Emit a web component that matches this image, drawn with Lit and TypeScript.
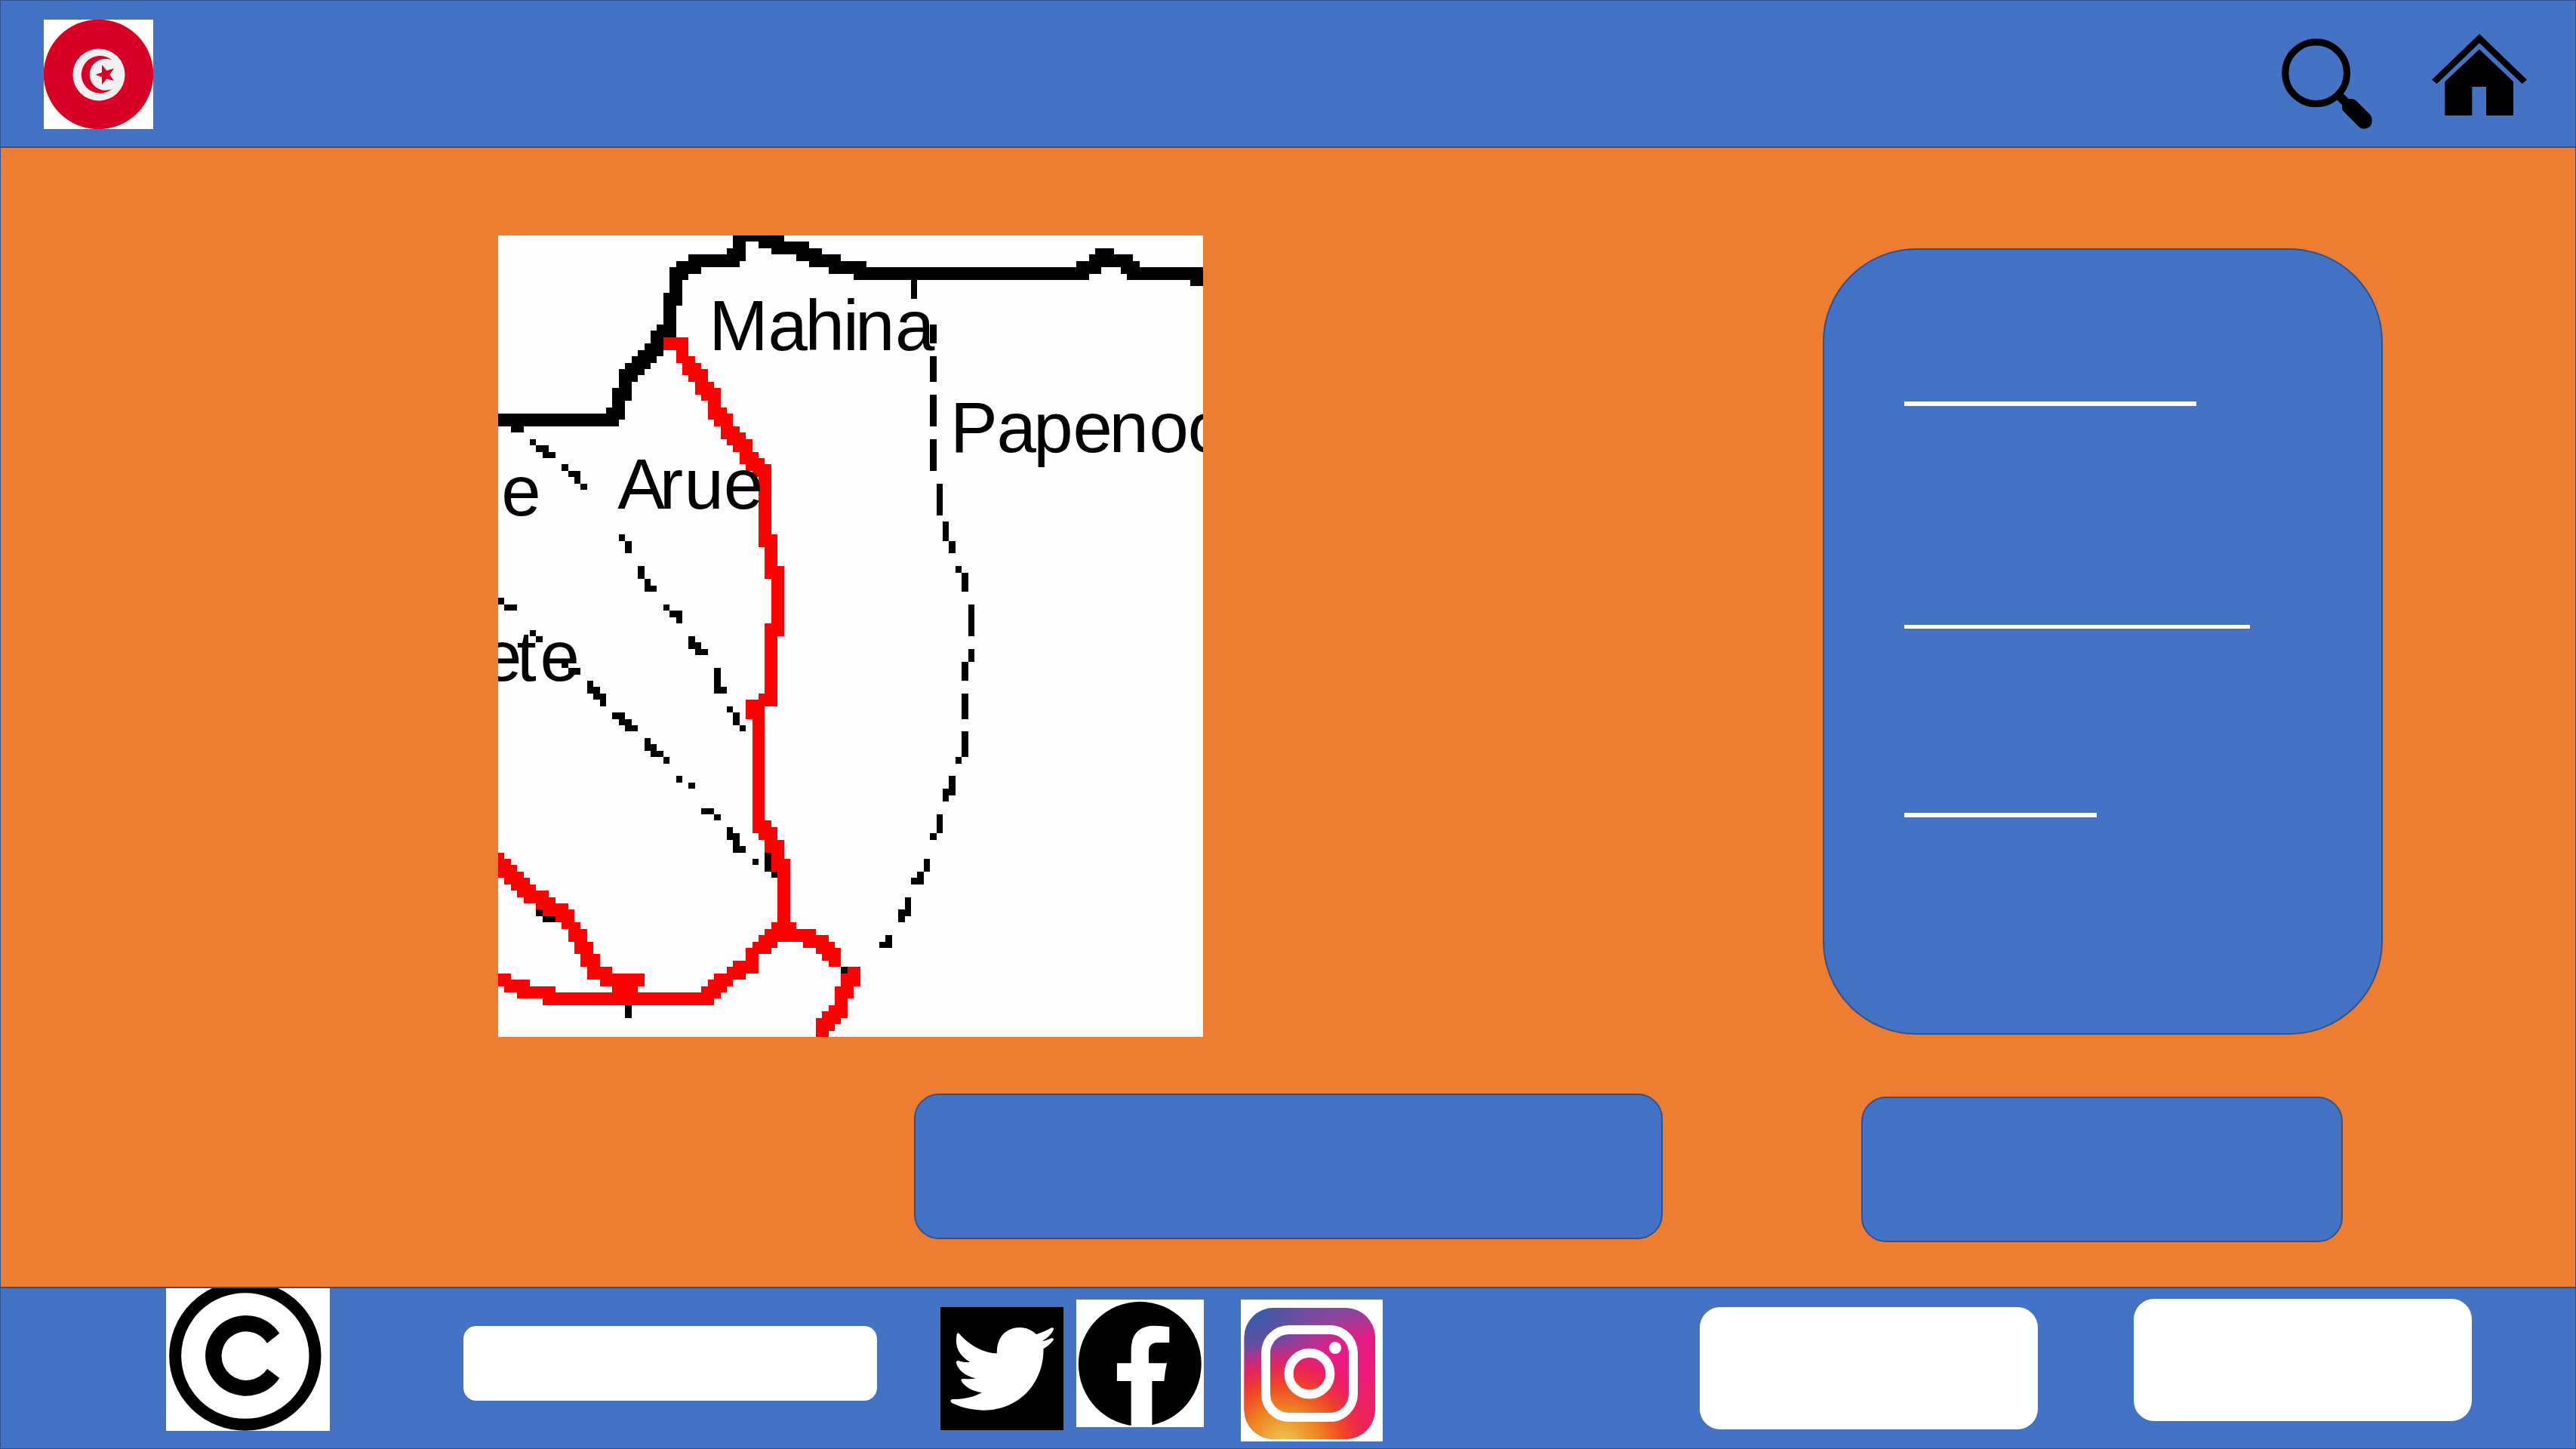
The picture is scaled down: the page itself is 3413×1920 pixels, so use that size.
import { LitElement, html, css, svg } from "lit";
import { customElement } from "lit/decorators.js";

// Map artwork lives on a 111 x 126 cell grid.
// Every run is [column start, column end, row start, row end].
type Run = [number, number, number, number];

const COAST: Run[] = [
  [37, 45, 0, 1], [37, 39, 1, 4], [41, 49, 1, 2], [36, 39, 2, 4], [43, 51, 2, 3],
  [47, 54, 3, 4], [49, 58, 4, 5], [30, 39, 3, 4], [30, 38, 4, 5], [28, 32, 4, 6],
  [27, 30, 5, 7], [27, 29, 7, 11], [26, 28, 9, 16], [25, 28, 14, 16], [24, 28, 15, 16],
  [24, 26, 16, 17], [23, 26, 17, 18], [22, 26, 18, 19], [21, 25, 19, 20], [20, 24, 20, 21],
  [19, 23, 21, 22], [19, 22, 22, 23], [19, 21, 23, 24], [18, 21, 24, 26], [18, 20, 26, 27],
  [17, 20, 27, 28], [0, 20, 28, 29], [0, 19, 29, 30], [2, 4, 30, 31],
  [94, 97, 2, 3], [93, 100, 3, 4], [91, 101, 4, 5], [52, 95, 5, 6], [98, 111, 5, 6],
  [56, 93, 6, 7], [99, 111, 6, 7], [109, 111, 7, 8], [65, 66, 7, 10],
];

const DASHES: Run[] = [
  [68, 69, 14, 17], [68, 69, 19, 23], [68, 69, 25, 30], [68, 69, 32, 37], [69, 70, 39, 44],
  [70, 71, 45, 48], [71, 72, 48, 50], [72, 73, 52, 53], [73, 74, 53, 56], [74, 75, 58, 63],
  [74, 75, 65, 67], [73, 74, 67, 70], [73, 74, 72, 76], [73, 74, 78, 82], [72, 73, 82, 83],
  [71, 72, 85, 88], [70, 71, 87, 89], [69, 70, 91, 94], [68, 69, 94, 95], [67, 68, 98, 100],
  [66, 67, 100, 102], [65, 66, 101, 102], [64, 65, 104, 107], [63, 64, 106, 108],
  [61, 62, 110, 112], [60, 61, 111, 112],
  [5, 6, 32, 33], [6, 8, 33, 34], [7, 9, 34, 35], [10, 11, 36, 37], [11, 13, 37, 38],
  [12, 13, 38, 39], [13, 14, 39, 40],
  [19, 20, 47, 48], [20, 21, 48, 50], [22, 23, 52, 54], [23, 24, 54, 55], [23, 25, 55, 56],
  [26, 27, 58, 59], [27, 29, 59, 60], [28, 29, 60, 61], [30, 31, 63, 65], [31, 32, 64, 65],
  [31, 33, 65, 66], [34, 35, 68, 72], [35, 36, 71, 72], [36, 37, 74, 75], [37, 38, 75, 77],
  [38, 39, 77, 78],
  [0, 1, 57, 58], [1, 3, 58, 59], [5, 6, 62, 63], [6, 7, 63, 64], [10, 11, 67, 68],
  [11, 13, 68, 69], [14, 15, 70, 72], [15, 16, 71, 73], [16, 17, 72, 74], [18, 20, 75, 76],
  [19, 21, 76, 77], [20, 22, 77, 78], [23, 24, 79, 81], [24, 25, 80, 81], [24, 26, 81, 82],
  [26, 27, 82, 83], [28, 29, 85, 86], [30, 31, 86, 87], [32, 34, 90, 91], [34, 35, 91, 92],
  [36, 37, 93, 95], [37, 38, 94, 97], [38, 39, 96, 97], [40, 41, 98, 99], [42, 43, 97, 100],
  [43, 44, 100, 101], [6, 7, 106, 107], [7, 9, 107, 108], [20, 21, 121, 123], [54, 55, 115, 116],
];

const ROUTE: Run[] = [
  [26, 30, 16, 18], [28, 30, 18, 19], [28, 31, 19, 20], [29, 32, 20, 21], [29, 33, 21, 22],
  [30, 33, 22, 23], [31, 34, 23, 24], [31, 35, 24, 25], [32, 35, 25, 26], [33, 35, 26, 27],
  [33, 36, 27, 28], [33, 37, 28, 29], [34, 37, 29, 30], [35, 38, 30, 31], [35, 39, 31, 32],
  [36, 40, 32, 33], [37, 40, 33, 34], [38, 41, 34, 35], [38, 42, 35, 36], [39, 43, 36, 37],
  [40, 43, 37, 38], [41, 43, 38, 47], [41, 44, 47, 49], [42, 44, 49, 52], [42, 45, 52, 54],
  [43, 45, 54, 61], [42, 45, 61, 63], [42, 44, 63, 72], [41, 44, 72, 73], [39, 44, 73, 74],
  [39, 42, 74, 76], [40, 42, 76, 92], [40, 43, 92, 93], [40, 44, 93, 94], [41, 44, 94, 95],
  [42, 45, 95, 98], [43, 46, 98, 100], [44, 46, 100, 108], [43, 47, 108, 109],
  [42, 50, 109, 110], [41, 52, 110, 111], [40, 44, 111, 112], [48, 53, 111, 112],
  [39, 43, 112, 113], [50, 54, 112, 113], [39, 41, 113, 114], [51, 54, 113, 114],
  [37, 41, 114, 115], [52, 54, 114, 115], [36, 41, 115, 116], [55, 57, 115, 116],
  [34, 39, 116, 117], [54, 57, 116, 118], [33, 37, 117, 118], [32, 36, 118, 119],
  [53, 56, 118, 120], [53, 55, 120, 121], [52, 55, 121, 122], [51, 55, 122, 123],
  [50, 54, 123, 124], [50, 53, 124, 125], [50, 52, 125, 126],
  [0, 1, 97, 98], [0, 2, 98, 99], [0, 3, 99, 100], [0, 4, 100, 101], [1, 5, 101, 102],
  [2, 6, 102, 103], [3, 8, 103, 104], [4, 9, 104, 105], [6, 11, 105, 106], [7, 12, 106, 107],
  [9, 12, 107, 108], [10, 13, 108, 109], [11, 14, 109, 111], [12, 15, 111, 113],
  [13, 16, 113, 115], [14, 18, 115, 116], [14, 23, 116, 117], [16, 23, 117, 118],
  [18, 22, 118, 119], [0, 2, 116, 117], [0, 5, 117, 118], [1, 9, 118, 119],
  [3, 35, 119, 120], [7, 34, 120, 121],
];

const toPath = (runs: Run[]) =>
  runs.map(([x0, x1, y0, y1]) => `M${x0} ${y0}H${x1}V${y1}H${x0}Z`).join("");

// Place names: one x origin per letter, and the baseline row.
const PLACES = [
  { name: "Mahina", x: "33.2 42.5 48.3 54.3 56.2 62.5", y: 18 },
  { name: "Papenoo", x: "71.2 78.5 84.3 90.5 96.2 102.5 108.6", y: 34 },
  { name: "Arue", x: "18.8 25.4 29.3 35.5", y: 43 },
  { name: "e", x: "0.5", y: 44 },
  { name: "ete", x: "-2.5 2.9 6.6", y: 70 },
];

@customElement("district-map")
class DistrictMap extends LitElement {
  static styles = css`
    :host { display: block; background: #fffdfe; }
    .map { display: block; width: 100%; height: 100%; overflow: hidden; }
    .ink { fill: #030102; }
    .route { fill: #ff0000; }
    .crisp { shape-rendering: crispEdges; }
    .place { font: 11.2px "Liberation Sans", Arial, sans-serif; fill: #030102; }
  `;

  render() {
    return html`
      <svg class="map" viewBox="0 0 111 126" preserveAspectRatio="none">
        <path class="route crisp" d=${toPath(ROUTE)}></path>
        <path class="ink crisp" d=${toPath(COAST)}></path>
        <path class="ink crisp" d=${toPath(DASHES)}></path>
        ${PLACES.map((p) => svg`<text class="place" x=${p.x} y=${p.y}>${p.name}</text>`)}
      </svg>
    `;
  }
}

@customElement("app-root")
class AppRoot extends LitElement {
  static styles = css`
    :host {
      display: block;
      --blue: #4472c4;
      --edge: #2f528f;
      --orange: #ed7d31;
    }
    * { box-sizing: border-box; }
    svg { display: block; flex: none; }
    .page {
      width: 3413px;
      height: 1920px;
      display: flex;
      flex-direction: column;
      border: 1px solid var(--edge);
      background: var(--orange);
      overflow: hidden;
    }
    .header {
      flex: none;
      display: flex;
      align-items: flex-start;
      height: 195px;
      padding: 25px 64px 0 57px;
      background: var(--blue);
      border-bottom: 2px solid var(--edge);
    }
    .flag { width: 145px; height: 145px; background: #fff; }
    .search { width: 120px; height: 120px; margin: 25px 79px 0 auto; }
    .home { width: 126px; height: 108px; margin-top: 19px; }

    .main { flex: 1; display: flex; flex-direction: column; }
    .row { display: flex; align-items: flex-start; }
    .overview { padding: 116px 0 0 659px; height: 1178px; }
    .map { flex: none; width: 934px; height: 1062px; }
    .panel {
      flex: none;
      width: 742px;
      height: 1042px;
      margin: 17px 0 0 821px;
      padding: 201px 0 0 106px;
      background: var(--blue);
      border: 2px solid var(--edge);
      border-radius: 124px;
    }
    .rule { height: 6px; background: #fff; }
    .rule.first { width: 387px; }
    .rule.second { width: 458px; margin-top: 290px; height: 5px; }
    .rule.third { width: 255px; margin-top: 244px; }
    .actions { padding: 75px 0 0 1210px; }
    .box {
      flex: none;
      height: 193px;
      background: var(--blue);
      border: 2px solid var(--edge);
      border-radius: 33px;
    }
    .box.wide { width: 992px; }
    .box.narrow { width: 638px; margin: 4px 0 0 263px; }

    .footer {
      flex: none;
      display: flex;
      align-items: flex-start;
      height: 214px;
      padding-left: 219px;
      background: var(--blue);
      border-top: 2px solid var(--edge);
    }
    .copyright { width: 217px; height: 189px; background: #fff; }
    .field { flex: none; background: #fff; }
    .field.notice { width: 548px; height: 99px; margin: 50px 0 0 177px; border-radius: 17px; }
    .field.left { width: 448px; height: 162px; margin: 25px 0 0 420px; border-radius: 27px; }
    .field.right { width: 448px; height: 162px; margin: 14px 0 0 127px; border-radius: 27px; }
    .twitter { width: 163px; height: 163px; margin: 25px 0 0 84px; background: #000; }
    .facebook { width: 169px; height: 169px; margin: 15px 0 0 17px; background: #fff; }
    .instagram { width: 188px; height: 188px; margin: 15px 0 0 49px; background: #fff; }
  `;

  private header() {
    return html`
      <header class="header">
        <svg class="flag" viewBox="0 0 145 145">
          <circle cx="72.5" cy="72.5" r="72.7" fill="#d80027"></circle>
          <circle cx="73" cy="73" r="34.5" fill="#f0f0f0"></circle>
          <path fill="#d80027" d="M90.7 54A24.8 24.8 0 1 0 90.7 91.7A20.9 20.9 0 1 1 90.7 54Z"></path>
          <path fill="#d80027" d="M68.3 73L77 70V59.7L83.3 67.5L93 64.7L87.3 73L93 81L83.3 78.5L77 86.3V76Z"></path>
        </svg>
        <svg class="search" viewBox="189 153 360 360">
          <circle cx="326" cy="290" r="122.500" fill="none" stroke="#000" stroke-width="27"></circle>
          <path d="M406 394L432 370L455 393H468Q478 393 486 401L539 454Q548 464 548 480Q547 511 516 512Q504 512 495 503L437 445Q429 437 429 429V417Z"></path>
        </svg>
        <svg class="home" viewBox="786 135 378 324">
          <path d="M975 135L1164 317L1145 333L975 171L806 333L786 317Z"></path>
          <path d="M975 196L1110 325V459H1002V345H946V459H838V325Z"></path>
        </svg>
      </header>
    `;
  }

  private footer() {
    return html`
      <footer class="footer">
        <svg class="copyright" viewBox="60 51 651 567" preserveAspectRatio="none">
          <ellipse cx="374.500" cy="319.500" rx="278" ry="274" fill="none" stroke="#000" stroke-width="48"></ellipse>
          <path d="M511 230A161 160 0 1 0 511 408L462 371A98 97 0 1 1 462 269Z"></path>
        </svg>
        <div class="field notice"></div>
        <svg class="twitter" viewBox="64 126 399 489" preserveAspectRatio="none">
          <path fill="#fff" d="M124 230C153 272 198 308 247 310C246 240 280 207 322 207C345 207 362 219 375 234C395 228 412 216 424 208Q434 206 430 218C422 236 410 249 394 261C405 260 415 254 424 249Q434 249 430 258C420 273 410 283 398 292C400 420 325 535 205 536C160 535 128 522 102 508Q92 498 102 492C140 493 172 484 198 466C165 460 142 442 131 418Q130 410 140 411C155 413 168 412 179 409C145 400 119 375 115 345Q116 337 124 340C137 346 148 346 160 344C124 318 110 284 117 235Q119 226 124 230Z"></path>
        </svg>
        <svg class="facebook" viewBox="505 96 414 507" preserveAspectRatio="none">
          <ellipse cx="711.500" cy="352" rx="199.500" ry="247.500"></ellipse>
          <path fill="#fff" d="M683 603V420H637V349H683V300C683 225 715 200 762 200Q785 201 807 205V267H770C750 267 740 278 740 302V349H799Q793 380 790 420H751V603Z"></path>
        </svg>
        <svg class="instagram" viewBox="0 0 188 188">
          <defs>
            <linearGradient id="base" x1="0" y1="0" x2="0.25" y2="1">
              <stop offset="0" stop-color="#6a4fa0"></stop>
              <stop offset="0.22" stop-color="#88479c"></stop>
              <stop offset="0.42" stop-color="#e01e88"></stop>
              <stop offset="0.65" stop-color="#ee1a7c"></stop>
              <stop offset="1" stop-color="#e8265c"></stop>
            </linearGradient>
            <radialGradient id="cool" cx="0.05" cy="0" r="0.7">
              <stop offset="0" stop-color="#2c5fae"></stop>
              <stop offset="0.35" stop-color="#5153a4" stop-opacity="0.85"></stop>
              <stop offset="1" stop-color="#8a469c" stop-opacity="0"></stop>
            </radialGradient>
            <radialGradient id="warm" cx="0.3" cy="1.05" r="0.78">
              <stop offset="0" stop-color="#edc76a"></stop>
              <stop offset="0.15" stop-color="#ecb040"></stop>
              <stop offset="0.36" stop-color="#ee8422"></stop>
              <stop offset="0.6" stop-color="#ef4526"></stop>
              <stop offset="0.8" stop-color="#ee2350" stop-opacity="0.7"></stop>
              <stop offset="1" stop-color="#ee1a7c" stop-opacity="0"></stop>
            </radialGradient>
          </defs>
          <rect x="4.500" y="11" width="173.500" height="174" rx="39" fill="url(#base)"></rect>
          <rect x="4.500" y="11" width="173.500" height="174" rx="39" fill="url(#cool)"></rect>
          <rect x="4.500" y="11" width="173.500" height="174" rx="39" fill="url(#warm)"></rect>
          <g fill="none" stroke="#fff" stroke-width="12">
            <rect x="33" y="40" width="116" height="116" rx="31"></rect>
            <circle cx="91" cy="98.200" r="27.400"></circle>
          </g>
          <circle cx="125" cy="64" r="8" fill="#fff"></circle>
        </svg>
        <div class="field left"></div>
        <div class="field right"></div>
      </footer>
    `;
  }

  render() {
    return html`
      <div class="page">
        ${this.header()}
        <main class="main">
          <section class="row overview">
            <district-map class="map"></district-map>
            <div class="panel">
              <div class="rule first"></div>
              <div class="rule second"></div>
              <div class="rule third"></div>
            </div>
          </section>
          <section class="row actions">
            <div class="box wide"></div>
            <div class="box narrow"></div>
          </section>
        </main>
        ${this.footer()}
      </div>
    `;
  }
}
